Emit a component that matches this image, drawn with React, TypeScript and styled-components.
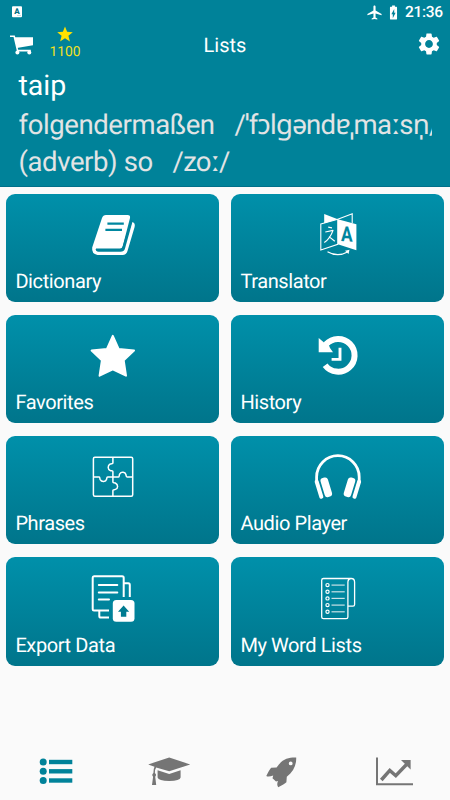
import React from "react";
import styled, { createGlobalStyle } from "styled-components";
import { MdAirplanemodeActive, MdBatteryChargingFull, MdSettings } from "react-icons/md";

const TEAL = "#008299";

const GlobalStyle = createGlobalStyle`
  * { box-sizing: border-box; }
  body { margin: 0; background: #fafafa; font-family: Roboto, "Noto Sans", sans-serif; text-rendering: geometricPrecision; }
  svg { display: block; flex: none; }
`;

const Screen = styled.div`
  display: flex;
  flex-direction: column;
  width: 450px;
  height: 800px;
  overflow: hidden;
  background: #fafafa;
`;

const Header = styled.header`
  height: 187px;
  flex: none;
  background: ${TEAL};
  border-bottom: 1px solid #00708a;
  color: #fff;
`;

const StatusBar = styled.div`
  display: flex;
  align-items: center;
  justify-content: space-between;
  height: 24px;
  padding: 0 7px 0 12px;
`;

const StatusIcons = styled.div`
  display: flex;
  align-items: center;
  gap: 2px;
`;

const Clock = styled.span`
  width: 38px;
  margin-left: 1px;
  font-size: 15.5px;
  font-weight: 500;
  line-height: 24px;
  letter-spacing: -0.3px;
  white-space: nowrap;
`;

const Toolbar = styled.div`
  display: grid;
  grid-template-columns: 1fr auto 1fr;
  align-items: center;
  height: 42px;
  padding: 0 8px 0 10px;
`;

const ToolbarLeft = styled.div`
  display: flex;
  align-items: center;
  gap: 15.5px;
`;

const Points = styled.div`
  display: flex;
  flex-direction: column;
  align-items: center;
  width: 33px;
  margin-bottom: 4px;
  color: #f5e01e;
  font-size: 13.8px;
  line-height: 16px;
  gap: 2px;
`;

const Title = styled.h1`
  margin: 0 2px 0 0;
  font-size: 20px;
  font-weight: 400;
  line-height: 24px;
`;

const ToolbarRight = styled.div`
  display: flex;
  justify-content: flex-end;
  padding-bottom: 2px;
`;

const Word = styled.div`
  margin: 2px 18px 0 18.5px;
  font-size: 28.5px;
  line-height: 36px;
  height: 39px;
`;

const Meaning = styled.div`
  margin: 0 18px 0 18.5px;
  overflow: hidden;
  color: #e2e4e5;
  font-size: 27.5px;
  line-height: 36px;
  height: 36.6px;
  letter-spacing: -0.4px;
  white-space: pre;
`;

const Phonetic = styled.span`
  margin-left: 0.5px;
  letter-spacing: -0.73px;
`;

const CardGrid = styled.main`
  display: grid;
  grid-template-columns: 212.4px 212.4px;
  grid-auto-rows: 108.3px;
  gap: 13px 12.6px;
  padding: 6.5px 6.2px 0 6.4px;
  flex: 1;
`;

const Card = styled.section`
  display: flex;
  flex-direction: column;
  align-items: center;
  padding-top: 17.4px;
  border-radius: 9px;
  background: linear-gradient(#0090aa, #00758b);
  color: #fff;
`;

const CardLabel = styled.span`
  align-self: flex-start;
  margin: 9.9px 0 0 9px;
  font-size: 20px;
  line-height: 24px;
  letter-spacing: -0.4px;
`;

const NavBar = styled.nav`
  display: grid;
  grid-template-columns: repeat(4, 1fr);
  height: 45px;
  flex: none;
`;

const NavItem = styled.div<{ $active?: boolean }>`
  display: flex;
  justify-content: center;
  color: ${(p) => (p.$active ? TEAL : "#757575")};
`;

const CardIcon = ({ children }: { children: React.ReactNode }) => (
  <svg width="48" height="48" viewBox="0 0 48 48" fill="none" stroke="#fff" strokeLinejoin="round">
    {children}
  </svg>
);

const NavIcon = ({ children }: { children: React.ReactNode }) => (
  <svg width="44" height="34" viewBox="0 0 44 34" fill="currentColor">
    {children}
  </svg>
);

const DictionaryIcon = () => (
  <CardIcon>
    <path d="M17 4H38.5Q41.7 4 41 7L33.5 36Q32.8 38.8 30 38.8H8Q6 38.8 6.2 37Q6.6 40.7 9.5 40.7H31.5Q35 40.7 36 37.5L43.4 11Q46.6 12.2 45.6 16L38.5 40Q37.3 43.9 33.5 43.9H8.5Q2.4 43 3.2 36.5L13 7Q14 4 17 4Z" fill="#fff" stroke="none" />
    <path d="M7 38.4H31Q33.7 38.4 34.6 35.4L42.6 9" stroke="#00829a" strokeWidth="1.8" />
    <path d="M18.4 12.6H34.8M16.4 18.9H33" stroke="#0087a0" strokeWidth="2.2" />
  </CardIcon>
);

const TranslatorIcon = () => (
  <CardIcon>
    <path d="M10.2 3L23.8 8.3L10.2 12.3Z" fill="#fff" stroke="none" />
    <path d="M23.8 8.3L38.2 2.7V12M6.8 13L23.8 8.3V33.3L6.8 39Z" strokeWidth="1.1" strokeLinejoin="miter" />
    <path d="M23.8 8.3L42.4 13.3V39.3L23.8 33.3Z" fill="#fff" stroke="none" />
    <path d="M14.2 16.2L18 16.8M11.3 21L19 19.4Q16.2 27.5 10.3 31.6M15 25.6L20.8 30.2" strokeWidth="1.2" />
    <text x="27" y="30" fill="#00859e" stroke="none" fontFamily="Roboto, sans-serif" fontWeight="700" fontSize="21" textLength="11.6" lengthAdjust="spacingAndGlyphs" transform="skewY(4) translate(0 -1.8)">A</text>
    <path d="M13.5 40.7Q23.5 46.5 33.5 41" strokeWidth="1.2" />
    <path d="M31 39.7L35.5 38.8L34.5 43Z" fill="#fff" stroke="none" />
  </CardIcon>
);

const FavoritesIcon = () => (
  <CardIcon>
    <path d="M23.8 3.8L29.6 17L45 18.6L34.7 28.4L37 43.7L23.8 37.3L10.6 43.7L12.9 28.4L2.6 18.6L18 17Z" fill="#fff" strokeWidth="2" />
  </CardIcon>
);

const HistoryIcon = () => (
  <CardIcon>
    <path d="M11.1 33.2A16.4 16.4 0 1 0 12 12.3" strokeWidth="6" />
    <path d="M4.7 5.9L10 10.5L13 8.5L16 16L19 20.3H4.7Z" fill="#fff" stroke="none" />
    <path d="M26 15.8V27.4H17.6" strokeWidth="2.9" strokeLinejoin="miter" />
  </CardIcon>
);

const PhrasesIcon = () => (
  <CardIcon>
    <rect x="4.4" y="4.2" width="39.3" height="39" rx="1.5" strokeWidth="1.5" />
    <path d="M4.4 23.9H10.3C11 23.9 10.6 25.5 11.2 26.6C12.7 29.2 16.8 29 17.6 26.2C18 25 17.5 23.9 18.7 23.9H29.6C30.6 23.9 29.9 22.2 30.7 21C32.2 18.4 36.2 18.9 36.9 21.5C37.2 22.7 37 23.9 38 23.9H43.7" strokeWidth="1.5" />
    <path d="M23.9 4.2V10C23.9 11 22.5 10.4 21.2 11C18.4 12.4 18.6 16.5 21.3 17.5C22.5 17.9 23.9 17.5 23.9 18.6V29C23.9 30 25 29.4 26.3 30C29.5 31.5 29.2 35.6 26.4 36.4C25.2 36.8 23.9 36.5 23.9 37.5V43.2" strokeWidth="1.5" />
  </CardIcon>
);

const AudioIcon = () => (
  <CardIcon>
    <path d="M2.6 30V24A21.3 21.3 0 0 1 45.2 24V30" strokeWidth="2.8" />
    <g fill="#fff" stroke="none">
      <rect x="-2" y="-9.8" width="4" height="19.6" rx="1.8" transform="translate(5 36.3) rotate(-17)" />
      <rect x="-3.8" y="-9.9" width="7.6" height="19.8" rx="3" transform="translate(12.3 34.3) rotate(-17)" />
      <rect x="-2" y="-9.8" width="4" height="19.6" rx="1.8" transform="translate(42.8 36.3) rotate(17)" />
      <rect x="-3.8" y="-9.9" width="7.6" height="19.8" rx="3" transform="translate(35.5 34.3) rotate(17)" />
    </g>
  </CardIcon>
);

const ExportIcon = () => (
  <CardIcon>
    <path d="M20 35.6H5Q3.7 35.6 3.7 34.2V2.8Q3.7 1.3 5 1.3H33.2Q34.7 1.3 34.7 2.8V22M34.7 8.3H39.3Q40.8 8.3 40.8 10V22M10.3 35.6V41Q10.3 42.6 12 42.6H20" strokeWidth="2" />
    <path d="M9.8 9.9H28.3M9.8 17.5H28.3M9.8 24.5H20" strokeWidth="2" strokeLinecap="round" />
    <rect x="23.8" y="25.1" width="21.7" height="21.7" rx="3.5" fill="#fff" stroke="none" />
    <path d="M34.6 30.6L40.2 36.8H37.3V41.8H31.9V36.8H29Z" fill="#007b91" stroke="none" />
  </CardIcon>
);

const WordListIcon = () => (
  <CardIcon>
    <path d="M37.2 3.5H9.5Q7.7 3.5 7.7 5.3V42Q7.7 43.7 9.5 43.7H32.2Q33.9 43.7 33.9 42V7Q34.2 3.5 37.2 3.5Q40.6 3.5 40.6 7.2V29.4Q40.6 31.1 39 31.1H34" strokeWidth="1.3" />
    {[10.1, 16.8, 23.4, 30.1, 36.8].map((y) => (
      <g key={y}>
        <circle cx="13.5" cy={y} r="1.6" strokeWidth="1.2" />
        <path d={`M17.5 ${y}H30.7`} strokeWidth="1.2" stroke="#c9e1e6" />
      </g>
    ))}
  </CardIcon>
);

const cards = [
  { label: "Dictionary", Icon: DictionaryIcon },
  { label: "Translator", Icon: TranslatorIcon },
  { label: "Favorites", Icon: FavoritesIcon },
  { label: "History", Icon: HistoryIcon },
  { label: "Phrases", Icon: PhrasesIcon },
  { label: "Audio Player", Icon: AudioIcon },
  { label: "Export Data", Icon: ExportIcon },
  { label: "My Word Lists", Icon: WordListIcon },
];

export default function App() {
  return (
    <>
      <GlobalStyle />
      <Screen>
        <Header>
          <StatusBar>
            <svg width="10" height="12" viewBox="0 0 10 12">
              <rect y="0.3" width="10" height="11" rx="1" fill="#fff" />
              <text x="5" y="8.3" fill="#006f83" textAnchor="middle" fontFamily="Roboto, sans-serif" fontWeight="900" fontSize="8">A</text>
              <path d="M5 9.5H9" stroke="#9bc9d1" strokeWidth="0.6" />
            </svg>
            <StatusIcons>
              <MdAirplanemodeActive size={17} />
              <MdBatteryChargingFull size={17} />
              <Clock>21:36</Clock>
            </StatusIcons>
          </StatusBar>
          <Toolbar>
            <ToolbarLeft>
              <svg width="23" height="21" viewBox="0 0 23 21" fill="none" stroke="#fff">
                <path d="M4.6 2.3H23V10.2L6.8 12.9Z" fill="#fff" stroke="none" />
                <path d="M0 1.2H4.2L7.6 15.6H20.8" strokeWidth="1.6" />
                <circle cx="7.4" cy="17.6" r="2" fill="#fff" stroke="none" />
                <circle cx="19.3" cy="17.6" r="2" fill="#fff" stroke="none" />
              </svg>
              <Points>
                <svg width="16" height="16" viewBox="0 0 16 16" fill="#ffe100">
                  <path d="M8 0.4L10.1 5.8L15.8 6.2L11.4 9.8L12.9 15.4L8 12.3L3.1 15.4L4.6 9.8L0.2 6.2L5.9 5.8Z" />
                </svg>
                1100
              </Points>
            </ToolbarLeft>
            <Title>Lists</Title>
            <ToolbarRight>
              <MdSettings size={26} />
            </ToolbarRight>
          </Toolbar>
          <Word>taip</Word>
          <Meaning>
            {"folgendermaßen   "}
            <Phonetic>{"/ˈfɔlɡəndɐˌmaːsn̩/"}</Phonetic>
          </Meaning>
          <Meaning>
            {"(adverb) so   "}
            <Phonetic>{"/zoː/"}</Phonetic>
          </Meaning>
        </Header>
        <CardGrid>
          {cards.map(({ label, Icon }) => (
            <Card key={label}>
              <Icon />
              <CardLabel>{label}</CardLabel>
            </Card>
          ))}
        </CardGrid>
        <NavBar>
          <NavItem $active>
            <NavIcon>
              {[7, 16.3, 25.5].map((y) => (
                <g key={y}>
                  <circle cx="9.2" cy={y} r="3.5" />
                  <rect x="15" y={y - 2.2} width="23.3" height="4.4" />
                </g>
              ))}
            </NavIcon>
          </NavItem>
          <NavItem>
            <NavIcon>
              <path d="M1.2 9.4L22.2 2.6L43.2 9.4L22.2 16.3L9.2 12.5Q7.9 14 7.9 18Q10 20 8.2 21.8L9.2 30H5L6.1 21.8Q4.3 20 6.4 18Q6.4 13.5 7.5 11.7Z" />
              <path d="M10.6 15.2L22.2 19L33.6 15.2V22.5Q33 25.6 22.2 26Q11.5 25.6 10.6 22.5Z" />
            </NavIcon>
          </NavItem>
          <NavItem>
            <NavIcon>
              <path fillRule="evenodd" d="M37.2 2.6C29 2.4 23 4.2 17.6 12.5L12.2 12.7Q10.3 14.6 7.3 21Q9.5 22.3 14.2 20.5L13.5 23.2L17 26.4L19 25.9Q17.4 30 19.2 32.2Q25.3 29.3 27.4 27.2L27.8 21.7C34.5 16.5 37.5 10 37.2 2.6ZM31.7 6.5A1.9 1.9 0 1 1 31.7 10.3A1.9 1.9 0 1 1 31.7 6.5Z" />
            </NavIcon>
          </NavItem>
          <NavItem>
            <NavIcon>
              <path d="M5 2.5V29.2H41" fill="none" stroke="currentColor" strokeWidth="2" />
              <path d="M9.3 25L17.8 15.4L23.8 20.7L35 9" fill="none" stroke="currentColor" strokeWidth="3.5" />
              <path d="M29 4.9H38.6V14.6Z" />
            </NavIcon>
          </NavItem>
        </NavBar>
      </Screen>
    </>
  );
}
